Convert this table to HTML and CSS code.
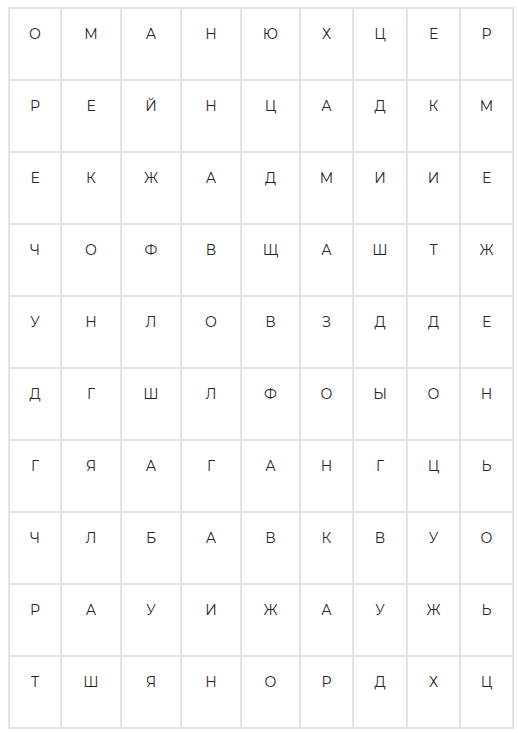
FILE: index.html
```html
<!DOCTYPE html>
<html lang="ru">
<head>
<meta charset="utf-8">
<link rel="stylesheet" href="styles.css">
</head>
<body>
<table class="grid">
<colgroup>
<col class="c1"><col class="c2"><col class="c3"><col class="c4"><col class="c5"><col class="c6"><col class="c7"><col class="c8"><col class="c9">
</colgroup>
<tbody>
<tr><td>О</td><td>М</td><td>А</td><td>Н</td><td>Ю</td><td>Х</td><td>Ц</td><td>Е</td><td>Р</td></tr>
<tr><td>Р</td><td>Е</td><td>Й</td><td>Н</td><td>Ц</td><td>А</td><td>Д</td><td>К</td><td>М</td></tr>
<tr><td>Е</td><td>К</td><td>Ж</td><td>А</td><td>Д</td><td>М</td><td>И</td><td>И</td><td>Е</td></tr>
<tr><td>Ч</td><td>О</td><td>Ф</td><td>В</td><td>Щ</td><td>А</td><td>Ш</td><td>Т</td><td>Ж</td></tr>
<tr><td>У</td><td>Н</td><td>Л</td><td>О</td><td>В</td><td>З</td><td>Д</td><td>Д</td><td>Е</td></tr>
<tr><td>Д</td><td>Г</td><td>Ш</td><td>Л</td><td>Ф</td><td>О</td><td>Ы</td><td>О</td><td>Н</td></tr>
<tr><td>Г</td><td>Я</td><td>А</td><td>Г</td><td>А</td><td>Н</td><td>Г</td><td>Ц</td><td>Ь</td></tr>
<tr><td>Ч</td><td>Л</td><td>Б</td><td>А</td><td>В</td><td>К</td><td>В</td><td>У</td><td>О</td></tr>
<tr><td>Р</td><td>А</td><td>У</td><td>И</td><td>Ж</td><td>А</td><td>У</td><td>Ж</td><td>Ь</td></tr>
<tr><td>Т</td><td>Ш</td><td>Я</td><td>Н</td><td>О</td><td>Р</td><td>Д</td><td>Х</td><td>Ц</td></tr>
</tbody>
</table>
</body>
</html>
```
FILE: styles.css
```css
html, body {
  margin: 0;
  background: #ffffff;
}
body {
  padding: 7px 6px 6px 8px;
  font-family: "Montserrat", "Inter", "Noto Sans", sans-serif;
}
.grid {
  border-collapse: collapse;
  table-layout: fixed;
  width: 504px;
  border: 2px solid #e4e4e4;
}
.grid td {
  border: 2px solid #e4e4e4;
  height: 68px;
  padding: 17px 0 0 0;
  vertical-align: top;
  text-align: center;
  font-size: 14px;
  line-height: 17px;
  color: #262626;
  box-sizing: border-box;
}
.grid tr { height: 72px; }
.c1 { width: 52px; }
.c2 { width: 60px; }
.c3 { width: 60px; }
.c4 { width: 60px; }
.c5 { width: 59px; }
.c6 { width: 53px; }
.c7 { width: 54px; }
.c8 { width: 53px; }
.c9 { width: 53px; }
```
